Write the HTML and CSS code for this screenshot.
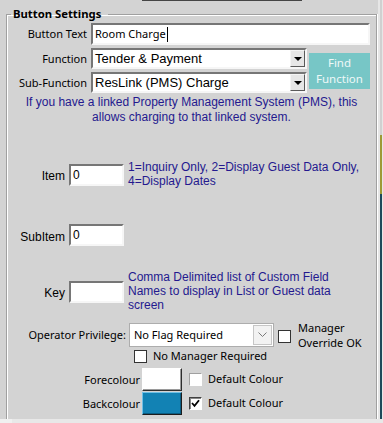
FILE: index.html
```html
<!DOCTYPE html>
<html lang="en">
<head>
  <meta charset="UTF-8" />
  <meta name="viewport" content="width=device-width, initial-scale=1.0" />
  <title>Button Settings</title>
  <link rel="stylesheet" href="styles.css">
</head>
<body>
  <div class="window">
    <div class="main">
      <div class="panel">
        <div class="topbar"></div>
        <fieldset class="group">
          <legend>Button Settings</legend>

          <div class="top-grid">
            <div class="label">Button Text</div>
            <div class="textbox wide">Room Charge<span class="caret"></span></div>

            <div class="label">Function</div>
            <div class="combo">
              <span class="combo-text">Tender &amp; Payment</span>
              <span class="combo-btn"><span class="arrow"></span></span>
            </div>
            <div class="find-btn">Find<br>Function</div>

            <div class="label">Sub-Function</div>
            <div class="combo">
              <span class="combo-text">ResLink (PMS) Charge</span>
              <span class="combo-btn"><span class="arrow"></span></span>
            </div>
          </div>

          <p class="note">If you have a linked Property Management System (PMS), this<br>allows charging to that linked system.</p>

          <div class="field-row item-row">
            <div class="field-label">Item</div>
            <div class="small-box">0</div>
            <div class="hint">1=Inquiry Only, 2=Display Guest Data Only,<br>4=Display Dates</div>
          </div>

          <div class="field-row subitem-row">
            <div class="field-label">SubItem</div>
            <div class="small-box">0</div>
          </div>

          <div class="field-row key-row">
            <div class="field-label">Key</div>
            <div class="small-box"></div>
            <div class="hint">Comma Delimited list of Custom Field<br>Names to display in List or Guest data<br>screen</div>
          </div>

          <div class="priv-row">
            <div class="priv-label">Operator Privilege:</div>
            <div class="flat-combo">
              <span class="flat-text">No Flag Required</span>
              <span class="flat-btn">
                <svg width="9" height="6" viewBox="0 0 9 6"><polyline points="0.5,0.5 4.5,4.5 8.5,0.5" fill="none" stroke="#7a7a7a" stroke-width="1"/></svg>
              </span>
            </div>
            <span class="check flat priv-check"></span>
            <div class="priv-text">Manager<br>Override OK</div>
          </div>

          <div class="nomgr-row">
            <span class="check flat"></span>
            <span class="check-text">No Manager Required</span>
          </div>

          <div class="colour-row">
            <div class="colour-label">Forecolour</div>
            <div class="swatch fore"></div>
            <span class="check sunk-light"></span>
            <span class="check-text">Default Colour</span>
          </div>
          <div class="colour-row">
            <div class="colour-label">Backcolour</div>
            <div class="swatch back"></div>
            <span class="check sunk-dark">
              <svg width="9" height="9" viewBox="0 0 9 9"><polyline points="1,4 3.5,6.8 8,1.2" fill="none" stroke="#000" stroke-width="1.8"/></svg>
            </span>
            <span class="check-text">Default Colour</span>
          </div>
        </fieldset>
      </div>
      <div class="side">
        <div class="side-line">
          <div class="seg seg-top"></div>
          <div class="seg seg-olive"></div>
          <div class="seg seg-dark"></div>
        </div>
      </div>
    </div>
    <div class="hscroll"><div class="hscroll-left"></div></div>
  </div>
</body>
</html>
```

FILE: styles.css
```css
    body {
      margin: 0;
      background: #d3d3d3;
      font-family: 'Noto Sans', sans-serif;
      font-size: 11px;
      color: #000;
    }

    .window {
      width: 383px;
      height: 423px;
      overflow: hidden;
      display: grid;
      grid-template-rows: 419px 4px;
    }

    .main {
      display: flex;
      height: 419px;
      overflow: hidden;
    }

    .panel {
      width: 378px;
      background: #d3d3d3;
    }

    .topbar {
      margin-left: 142px;
      width: 160px;
      height: 1px;
      background: #454545;
    }

    .group {
      box-sizing: border-box;
      width: 371px;
      height: 440px;
      margin: 5px 0 0 6px;
      padding: 0;
      border: 1px solid #a0a0a0;
      box-shadow: inset 1px 1px 0 #fff, 1px 0 0 #fff;
    }

    .group legend {
      margin-left: 4px;
      padding: 0 7px 0 2px;
      font-weight: 700;
      font-size: 11.3px;
      line-height: 16px;
    }

    .top-grid {
      display: grid;
      grid-template-columns: 84px 216px 66px;
      grid-template-rows: 22px 21px 21px;
      row-gap: 3px;
      margin-top: 1px;
    }

    .label {
      text-align: right;
      padding-right: 4px;
      line-height: 22px;
      white-space: nowrap;
    }

    .textbox {
      box-sizing: border-box;
      background: #fff;
      border: 2px solid;
      border-color: #767676 #f6f6f6 #f6f6f6 #767676;
      padding-left: 2px;
      font-size: 11px;
      line-height: 18px;
      display: flex;
      align-items: center;
    }

    .wide {
      grid-column: 2 / span 2;
      margin-right: 3px;
    }

    .caret {
      display: inline-block;
      width: 1px;
      height: 15px;
      background: #000;
      margin-left: 1px;
    }

    .combo {
      box-sizing: border-box;
      background: #fff;
      border: 2px solid;
      border-color: #767676 #f6f6f6 #f6f6f6 #767676;
      display: flex;
      align-items: stretch;
    }

    .combo-text {
      flex: 1;
      padding-left: 2px;
      font-family: 'Liberation Sans', sans-serif;
      font-size: 13px;
      line-height: 17px;
    }

    .combo-btn {
      box-sizing: border-box;
      width: 15px;
      background: #e6e6e6;
      border: 1px solid;
      border-color: #f4f4f4 #5a5a5a #5a5a5a #f4f4f4;
      display: flex;
      align-items: center;
      justify-content: center;
    }

    .arrow {
      width: 0;
      height: 0;
      border-left: 4px solid transparent;
      border-right: 4px solid transparent;
      border-top: 4px solid #000;
    }

    .find-btn {
      grid-column: 3;
      grid-row: 2 / span 2;
      align-self: center;
      justify-self: end;
      margin-right: 3px;
      width: 61px;
      height: 36px;
      box-sizing: border-box;
      padding-top: 2px;
      background: #77c6c6;
      color: #eef8f8;
      text-align: center;
      font-size: 11.5px;
      line-height: 16px;
    }

    .note {
      margin: 2px 0 0;
      text-align: center;
      font-family: 'Liberation Sans', sans-serif;
      font-size: 12px;
      line-height: 15px;
      color: #24198f;
    }

    .field-row {
      display: grid;
      grid-template-columns: 58px 55px auto;
      column-gap: 4px;
      align-items: center;
      font-family: 'Liberation Sans', sans-serif;
      font-size: 12px;
    }

    .item-row { margin-top: 35px; }
    .subitem-row { margin-top: 36px; }
    .key-row { margin-top: 24px; }

    .field-label {
      text-align: right;
      padding-top: 3px;
    }

    .small-box {
      box-sizing: border-box;
      height: 22px;
      background: #fff;
      border: 2px solid;
      border-color: #767676 #f6f6f6 #f6f6f6 #767676;
      padding-left: 2px;
      line-height: 18px;
    }

    .item-row .small-box,
    .key-row .small-box {
      margin-top: 2px;
    }

    .hint {
      color: #24198f;
      line-height: 14px;
      white-space: nowrap;
    }

    .priv-row {
      display: flex;
      align-items: flex-start;
      height: 29px;
      margin-top: 8px;
    }

    .priv-label {
      width: 119px;
      text-align: right;
      padding-right: 3px;
      margin-top: 3px;
      line-height: 23px;
      white-space: nowrap;
    }

    .flat-combo {
      box-sizing: border-box;
      width: 145px;
      height: 24px;
      margin-top: 3px;
      background: #fff;
      border: 1px solid #adadad;
      display: flex;
      align-items: stretch;
    }

    .flat-text {
      flex: 1;
      padding-left: 4px;
      line-height: 22px;
    }

    .flat-btn {
      box-sizing: border-box;
      width: 19px;
      margin: 1px;
      background: #f2f2f2;
      border: 1px solid #c6c6c6;
      display: flex;
      align-items: center;
      justify-content: center;
    }

    .check {
      box-sizing: border-box;
      width: 13px;
      height: 13px;
      flex: none;
      background: #fff;
      display: inline-flex;
      align-items: center;
      justify-content: center;
    }

    .check.flat {
      border: 1px solid #333;
    }

    .check.sunk-light {
      border: 1px solid;
      border-color: #a0a0a0 #fff #fff #a0a0a0;
    }

    .check.sunk-dark {
      border: 1px solid;
      border-color: #404040 #fff #fff #404040;
      box-shadow: inset 1px 1px 0 #888;
    }

    .priv-check {
      margin: 10px 0 0 4px;
    }

    .priv-text {
      margin-left: 7px;
      line-height: 15px;
    }

    .nomgr-row {
      display: flex;
      align-items: center;
      height: 14px;
      padding-left: 127px;
    }

    .check-text {
      margin-left: 6px;
      line-height: 14px;
      white-space: nowrap;
    }

    .colour-row {
      display: flex;
      align-items: center;
      height: 24px;
    }

    .nomgr-row + .colour-row {
      margin-top: 4px;
    }

    .colour-label {
      width: 133px;
      padding-right: 2px;
      text-align: right;
      white-space: nowrap;
    }

    .swatch {
      box-sizing: border-box;
      width: 40px;
      height: 23px;
      margin-right: 7px;
      border: 1px solid;
    }

    .swatch.fore {
      background: #fff;
      border-color: #fff #2e2e2e #2e2e2e #fff;
      box-shadow: inset -1px -1px 0 #9a9a9a;
    }

    .swatch.back {
      background: #1282b4;
      border-color: #6fc0e6 #1c1c1c #1c1c1c #6fc0e6;
      box-shadow: inset -1px -1px 0 #0b5d82;
    }

    .side {
      width: 5px;
      background: #e6e6e6;
      display: flex;
      padding-left: 2px;
      box-sizing: border-box;
    }

    .side-line {
      width: 2px;
      display: flex;
      flex-direction: column;
    }

    .seg-top { height: 135px; background: #d0d0d0; }
    .seg-olive { height: 59px; background: #9d9a35; }
    .seg-dark { flex: 1; background: #1d4a5a; }

    .hscroll {
      background: #e8e8e8;
      display: flex;
    }

    .hscroll-left {
      width: 12px;
      background: #f0f0f0;
    }
```
